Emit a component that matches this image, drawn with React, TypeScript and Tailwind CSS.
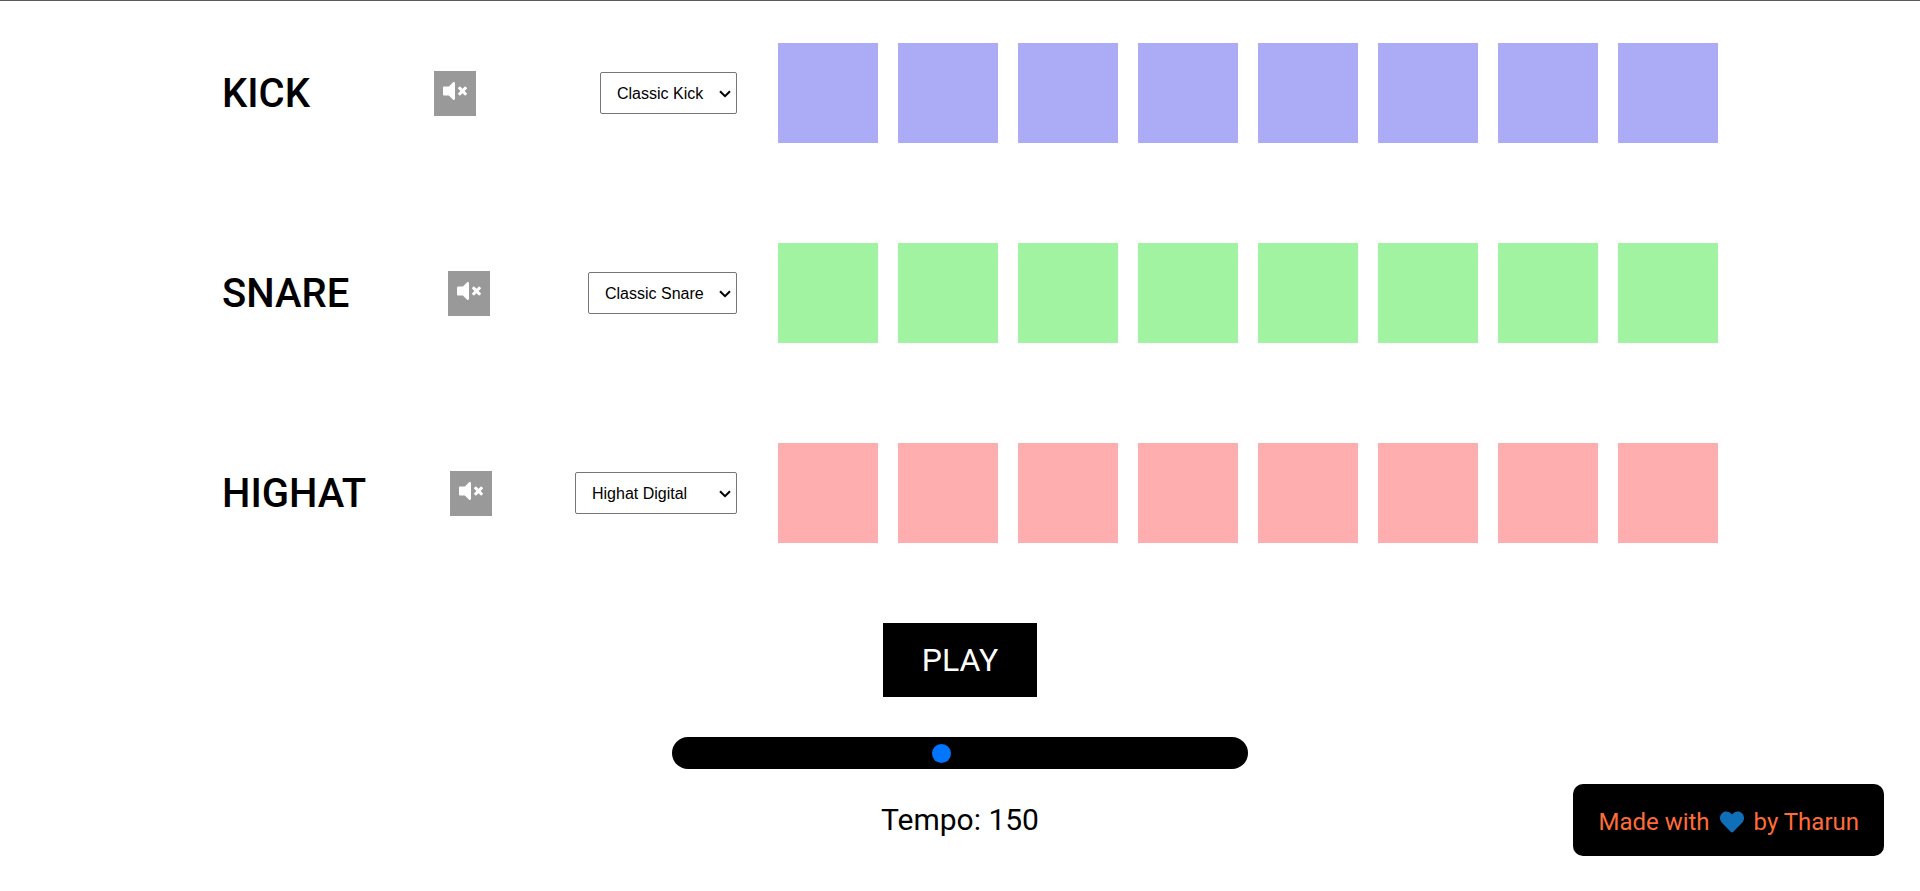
import React, { useState } from "react";
import { FaHeart, FaVolumeMute } from "react-icons/fa";

interface TrackProps {
  name: string;
  sounds: string[];
  color: string;
}

const tracks: TrackProps[] = [
  {
    name: "Kick",
    sounds: ["Classic Kick", "Kick Snare"],
    color: "bg-[#acabf5]",
  },
  {
    name: "Snare",
    sounds: ["Classic Snare", "Snare Loud"],
    color: "bg-[#a1f2a1]",
  },
  {
    name: "Highat",
    sounds: ["Highat Digital", "Highat Acoustic"],
    color: "bg-[#ffaeb0]",
  },
];

const Track: React.FC<TrackProps> = ({ name, sounds, color }) => {
  const [muted, setMuted] = useState(false);
  const [active, setActive] = useState<number[]>([]);

  const toggle = (i: number) =>
    setActive((prev) =>
      prev.includes(i) ? prev.filter((p) => p !== i) : [...prev, i]
    );

  return (
    <div className="flex items-center justify-center h-[200px] pl-5">
      <div className="flex items-center justify-between w-[515px] mr-[41px]">
        <h1 className="pt-[2px] text-[40px] leading-[50px] font-medium uppercase">
          {name}
        </h1>
        <button
          aria-label={`Mute ${name}`}
          onClick={() => setMuted(!muted)}
          className={`px-[9px] pt-2 pb-[13px] text-2xl text-white ${
            muted ? "bg-black" : "bg-[#999999]"
          }`}
        >
          <FaVolumeMute />
        </button>
        <div className="relative flex">
          <select
            aria-label={`${name} sound`}
            className="appearance-none h-[42px] pt-px pl-4 pr-8 border border-[#767676] rounded-xs bg-white font-['Liberation_Sans',sans-serif] text-base"
          >
            {sounds.map((sound) => (
              <option key={sound}>{sound}</option>
            ))}
          </select>
          <svg
            viewBox="0 0 12 8"
            className="absolute right-[6px] top-[18px] w-3 h-2 pointer-events-none"
            fill="none"
            stroke="#000"
            strokeWidth="2"
          >
            <path d="M1 1.2l5 5 5-5" />
          </svg>
        </div>
      </div>
      <div className="flex gap-5">
        {[0, 1, 2, 3, 4, 5, 6, 7].map((i) => (
          <button
            key={i}
            aria-label={`${name} beat ${i + 1}`}
            onClick={() => toggle(i)}
            className={`w-[100px] h-[100px] ${color} ${
              active.includes(i) ? "brightness-75" : ""
            }`}
          />
        ))}
      </div>
    </div>
  );
};

const App: React.FC = () => {
  const [playing, setPlaying] = useState(false);
  const [tempo, setTempo] = useState(150);

  return (
    <div className="min-h-screen flex flex-col bg-white text-black border-t border-[#5a5a5a] font-[Roboto,sans-serif]">
      <main className="-mt-2">
        {tracks.map((track) => (
          <Track key={track.name} {...track} />
        ))}
      </main>

      <div className="flex flex-col items-center pt-[30px]">
        <button
          onClick={() => setPlaying(!playing)}
          className="px-[39px] py-[18px] bg-black text-white text-[32px] leading-[38px]"
        >
          {playing ? "STOP" : "PLAY"}
        </button>
        <input
          id="tempo"
          type="range"
          min={10}
          max={310}
          value={tempo}
          onChange={(e) => setTempo(Number(e.target.value))}
          className="appearance-none w-[30%] h-8 mt-10 rounded-full bg-black [&::-webkit-slider-thumb]:appearance-none [&::-webkit-slider-thumb]:size-[19px] [&::-webkit-slider-thumb]:rounded-full [&::-webkit-slider-thumb]:bg-[#0075ff]"
        />
        <label htmlFor="tempo" className="mt-8 text-[30px] leading-[38px]">
          Tempo: {tempo}
        </label>
      </div>

      <footer className="fixed right-9 bottom-[35px] flex items-center gap-[10px] px-[25px] pt-1 h-[72px] rounded-[10px] bg-black text-[#ff6c37] text-2xl">
        <span>Made with</span>
        <FaHeart className="text-[#0f6fb9]" />
        <span>by Tharun</span>
      </footer>
    </div>
  );
};

export default App;
